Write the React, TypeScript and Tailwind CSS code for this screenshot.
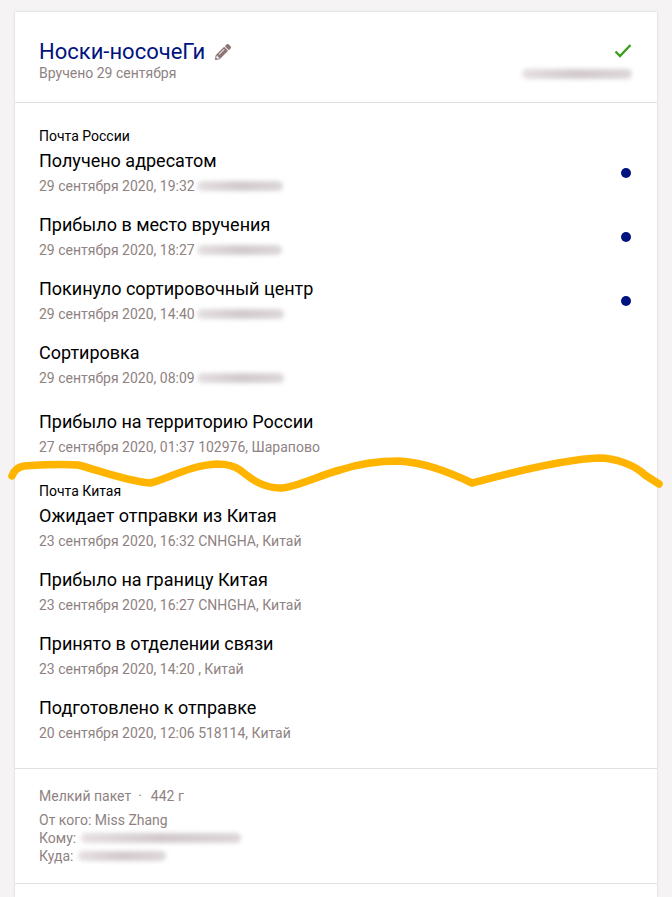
import React from 'react';
import { FaPencilAlt } from 'react-icons/fa';

interface TrackEvent {
  title: string;
  date: string;
  smudge?: string;
  dot?: boolean;
  extra?: boolean;
}

const russia: TrackEvent[] = [
  { title: 'Получено адресатом', date: '29 сентября 2020, 19:32', smudge: 'w-[86px]', dot: true },
  { title: 'Прибыло в место вручения', date: '29 сентября 2020, 18:27', smudge: 'w-[85px]', dot: true },
  { title: 'Покинуло сортировочный центр', date: '29 сентября 2020, 14:40', smudge: 'w-[87px]', dot: true },
  { title: 'Сортировка', date: '29 сентября 2020, 08:09', smudge: 'w-[87px]', extra: true },
  { title: 'Прибыло на территорию России', date: '27 сентября 2020, 01:37 102976, Шарапово' },
];

const china: TrackEvent[] = [
  { title: 'Ожидает отправки из Китая', date: '23 сентября 2020, 16:32 CNHGHA, Китай' },
  { title: 'Прибыло на границу Китая', date: '23 сентября 2020, 16:27 CNHGHA, Китай' },
  { title: 'Принято в отделении связи', date: '23 сентября 2020, 14:20 , Китай' },
  { title: 'Подготовлено к отправке', date: '20 сентября 2020, 12:06 518114, Китай' },
];

const Smudge: React.FC<{ className: string }> = ({ className }) => (
  <span className={`inline-block h-[10px] rounded-full bg-gradient-to-r from-[#e6e0e2] via-[#d2cacc] to-[#ddd7d9] blur-[2px] align-middle ${className}`} />
);

const Row: React.FC<{ item: TrackEvent }> = ({ item }) => (
  <div className={`flex h-[64px] justify-between pl-6 pr-[26px] ${item.extra ? 'mb-[5px]' : ''}`}>
    <div>
      <div className="text-[18px] leading-6 text-black">{item.title}</div>
      <div className="mt-[3px] flex items-center text-[14px] leading-5 text-[#8f8282]">
        <span>{item.date}</span>
        {item.smudge && <Smudge className={`ml-[2px] ${item.smudge}`} />}
      </div>
    </div>
    {item.dot && <span className="mt-[19px] h-[10px] w-[10px] shrink-0 rounded-full bg-[#00137f]" />}
  </div>
);

export default function App() {
  return (
    <div className="h-[897px] overflow-hidden bg-[#f6f3f4] px-[15px] pt-3 font-['Roboto',sans-serif]">
      <div className="h-full bg-white shadow-[0_0_2px_rgba(0,0,0,0.18)]">
        <div className="flex h-[91px] items-start justify-between border-b border-[#e0e0e0] pl-6 pr-[25px] pt-[28px]">
          <div>
            <div className="flex items-center gap-[10px]">
              <span className="text-[22px] leading-6 text-[#00137f]">Носки-носочеГи</span>
              <FaPencilAlt className="text-[16px] text-[#8d7575]" />
            </div>
            <div className="text-[14px] leading-[18px] text-[#8f8282]">Вручено 29 сентября</div>
          </div>
          <div className="flex flex-col items-end">
            <svg className="mt-[3px]" width="18" height="15" viewBox="0 0 18 15" fill="none" stroke="#3a9f1a" strokeWidth="2.4">
              <path d="M1.5 8.5 L6 13 L16.5 2" />
            </svg>
            <Smudge className="mt-[11px] w-[110px]" />
          </div>
        </div>

        <div className="pt-[25px]">
          <div className="mb-[5px] pl-6 text-[14px] leading-4 text-black">Почта России</div>
          {russia.map((item) => (
            <Row key={item.title} item={item} />
          ))}
          <div className="mb-[5px] mt-[9px] pl-6 text-[14px] leading-4 text-black">Почта Китая</div>
          {china.map((item) => (
            <Row key={item.title} item={item} />
          ))}
        </div>

        <div className="mt-2 border-b border-t border-[#e0e0e0] pb-[18px] pl-6 pt-[18px] text-[14px] text-[#8f8282]">
          <div className="leading-[18px]">
            Мелкий пакет<span className="mx-[7px]">·</span>
            <span className="ml-[2px]">442 г</span>
          </div>
          <div className="mt-[6px] leading-[18px]">От кого: Miss Zhang</div>
          <div className="flex items-center gap-[5px] leading-[18px]">
            Кому: <Smudge className="w-[160px]" />
          </div>
          <div className="flex items-center gap-[5px] leading-[18px]">
            Куда: <Smudge className="w-[88px]" />
          </div>
        </div>
      </div>

      <svg className="pointer-events-none absolute left-0 top-0 blur-[0.6px]" width="672" height="897" fill="none" stroke="#ffb400" strokeWidth="7.5" strokeLinecap="round" strokeLinejoin="round">
        <path d="M12 476 C14 470 18 467 24 466 C40 465 62 464 78 465 C95 469 125 481 150 483 C165 480 190 465 217 464 C225 464 233 465 240 470 C250 478 262 488 280 488 C295 488 320 475 340 470 C355 465 375 461 399 461 C420 462 445 470 472 483 C495 477 560 459 599 458 C615 458 635 465 645 475 L659 484" />
      </svg>
    </div>
  );
}
